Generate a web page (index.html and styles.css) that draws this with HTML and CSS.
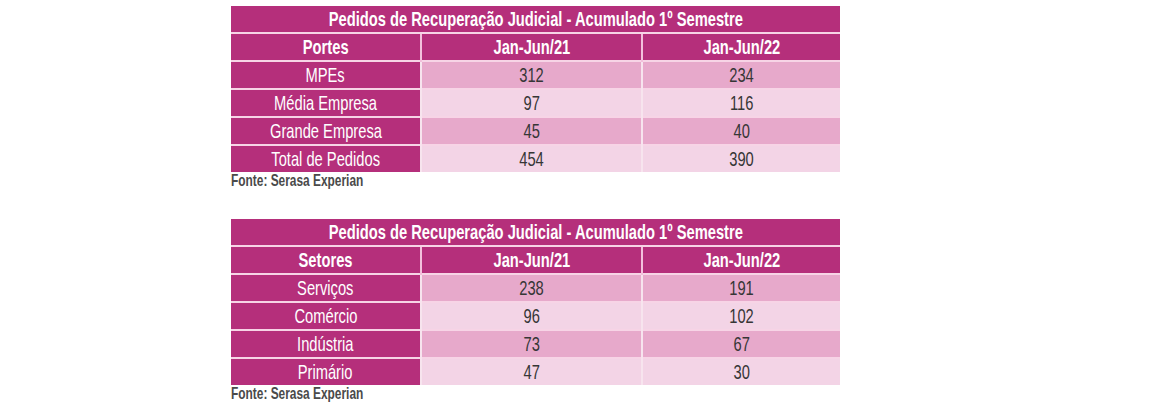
FILE: index.html
```html
<!DOCTYPE html>
<html lang="pt">
<head>
<meta charset="utf-8">
<title>Pedidos de Recuperação Judicial</title>
<link rel="stylesheet" href="styles.css">
</head>
<body>
<main class="page">
  <section class="block">
    <table class="tbl">
      <colgroup><col class="c1"><col class="c2"><col class="c3"></colgroup>
      <tr class="title"><th colspan="3"><span class="t">Pedidos de Recuperação Judicial - Acumulado 1º Semestre</span></th></tr>
      <tr class="head"><th><span class="t">Portes</span></th><th><span class="t">Jan-Jun/21</span></th><th><span class="t">Jan-Jun/22</span></th></tr>
      <tr class="dark"><td class="lbl"><span class="t">MPEs</span></td><td><span class="t">312</span></td><td><span class="t">234</span></td></tr>
      <tr class="light"><td class="lbl"><span class="t">Média Empresa</span></td><td><span class="t">97</span></td><td><span class="t">116</span></td></tr>
      <tr class="dark"><td class="lbl"><span class="t">Grande Empresa</span></td><td><span class="t">45</span></td><td><span class="t">40</span></td></tr>
      <tr class="light"><td class="lbl"><span class="t">Total de Pedidos</span></td><td><span class="t">454</span></td><td><span class="t">390</span></td></tr>
    </table>
    <p class="src"><span class="t">Fonte: Serasa Experian</span></p>
  </section>
  <section class="block">
    <table class="tbl">
      <colgroup><col class="c1"><col class="c2"><col class="c3"></colgroup>
      <tr class="title"><th colspan="3"><span class="t">Pedidos de Recuperação Judicial - Acumulado 1º Semestre</span></th></tr>
      <tr class="head"><th><span class="t">Setores</span></th><th><span class="t">Jan-Jun/21</span></th><th><span class="t">Jan-Jun/22</span></th></tr>
      <tr class="dark"><td class="lbl"><span class="t">Serviços</span></td><td><span class="t">238</span></td><td><span class="t">191</span></td></tr>
      <tr class="light"><td class="lbl"><span class="t">Comércio</span></td><td><span class="t">96</span></td><td><span class="t">102</span></td></tr>
      <tr class="dark"><td class="lbl"><span class="t">Indústria</span></td><td><span class="t">73</span></td><td><span class="t">67</span></td></tr>
      <tr class="light"><td class="lbl"><span class="t">Primário</span></td><td><span class="t">47</span></td><td><span class="t">30</span></td></tr>
    </table>
    <p class="src"><span class="t">Fonte: Serasa Experian</span></p>
  </section>
</main>
</body>
</html>
```
FILE: styles.css
```css
html, body {
  margin: 0;
  padding: 0;
  background: #ffffff;
}
body {
  font-family: "Liberation Sans", Arial, sans-serif;
}
.page {
  display: flex;
  flex-direction: column;
  gap: 29px;
  padding: 6px 0 0 231px;
}
.block {
  display: flex;
  flex-direction: column;
  align-items: flex-start;
}
.tbl {
  width: 609px;
  border-collapse: collapse;
  table-layout: fixed;
}
.c1 { width: 190px; }
.c2 { width: 221px; }
.c3 { width: 198px; }
.tbl th, .tbl td {
  padding: 0;
  height: 26px;
  text-align: center;
  font-size: 21px;
  line-height: 26px;
  white-space: nowrap;
  overflow: visible;
  border-top: 2px solid #f7d4e6;
  border-left: 2px solid #f7e4ee;
}
.tbl tr > :first-child { border-left: none; }
.tbl .title th { border-top: none; height: 25px; }
.tbl th {
  background: #b52f7b;
  color: #ffffff;
  font-weight: bold;
}
.tbl .head th { border-left-color: #f3c0dc; }
.tbl td { color: #363636; }
.tbl td.lbl { background: #b52f7b; color: #ffffff; }
.tbl .dark td { background: #e7a9cb; }
.tbl .light td { background: #f3d4e6; }
.tbl .dark td.lbl, .tbl .light td.lbl { background: #b52f7b; }
.t {
  display: inline-block;
  transform: scaleX(0.7);
  transform-origin: center;
}
.src {
  margin: 0;
  font-size: 17px;
  line-height: 18px;
  font-weight: bold;
  color: #4a4a4a;
}
.src .t { transform-origin: left center; }
```
